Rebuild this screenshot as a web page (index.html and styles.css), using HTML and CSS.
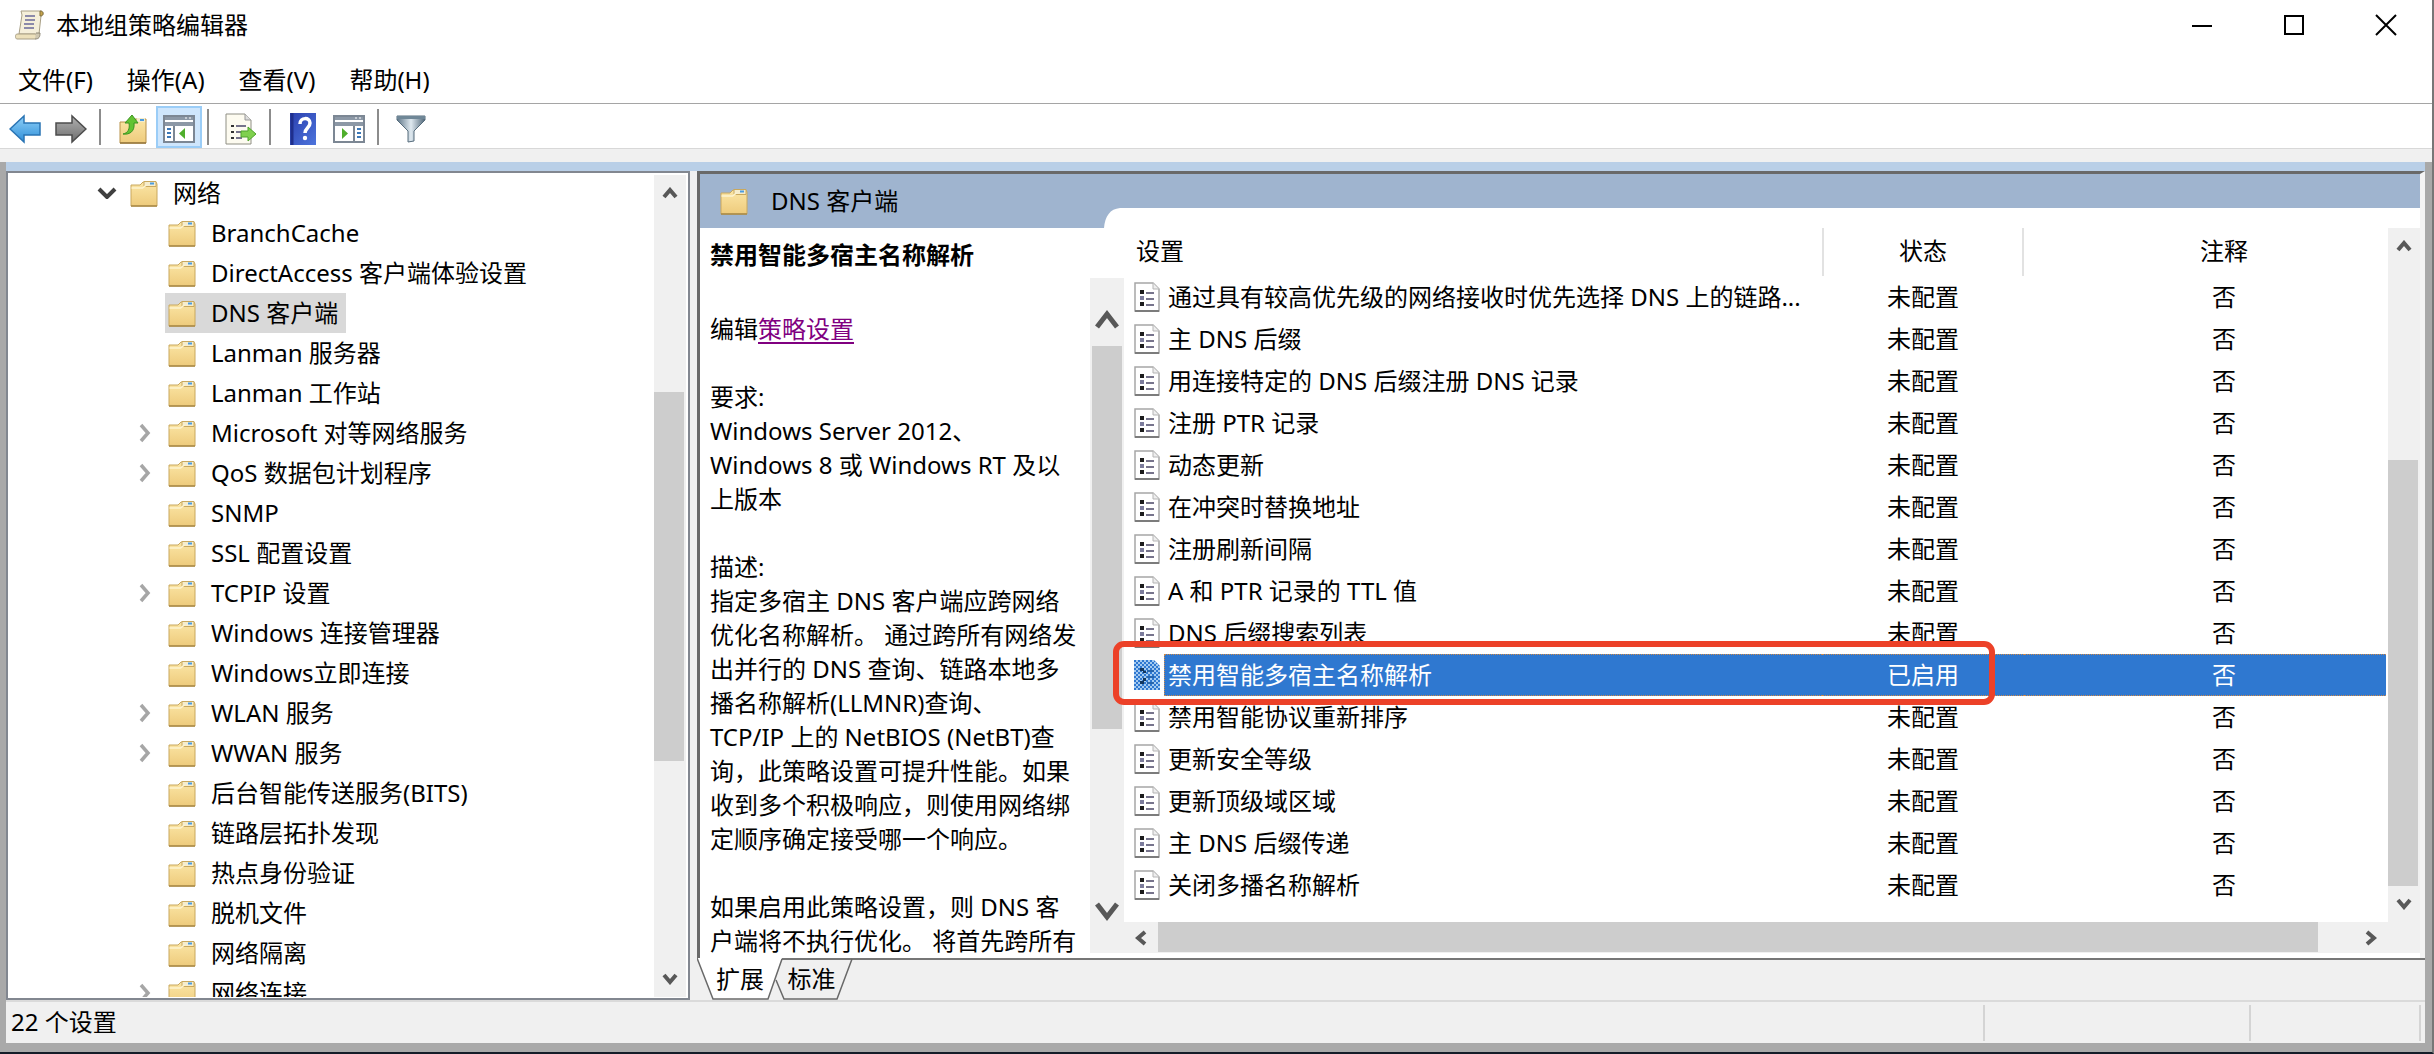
FILE: index.html
```html
<!DOCTYPE html>
<html lang="zh-CN">
<head>
<meta charset="utf-8">
<title>本地组策略编辑器</title>
<link rel="stylesheet" href="styles.css">
</head>
<body>
<svg class="defs" aria-hidden="true">
  <defs>
    <linearGradient id="gFolder" x1="0" y1="0" x2="0" y2="1"><stop offset="0" stop-color="#fbe6a6"/><stop offset="1" stop-color="#eecb7c"/></linearGradient>
    <linearGradient id="gBlue" x1="0" y1="0" x2="0" y2="1"><stop offset="0" stop-color="#8fd0f8"/><stop offset="1" stop-color="#2f8fd8"/></linearGradient>
    <linearGradient id="gGray" x1="0" y1="0" x2="0" y2="1"><stop offset="0" stop-color="#b0b0b0"/><stop offset="1" stop-color="#6e6e6e"/></linearGradient>
    <linearGradient id="gHelp" x1="0" y1="0" x2="1" y2="1"><stop offset="0" stop-color="#2a3fae"/><stop offset="1" stop-color="#4d74dc"/></linearGradient>
    <linearGradient id="gFunnel" x1="0" y1="0" x2="1" y2="0"><stop offset="0" stop-color="#5d7486"/><stop offset=".5" stop-color="#dfe9f0"/><stop offset="1" stop-color="#4f6678"/></linearGradient>
    <pattern id="pDither" width="4" height="4" patternUnits="userSpaceOnUse"><rect width="4" height="4" fill="#a4caf0"/><rect width="2" height="2" fill="#2f78d0"/><rect x="2" y="2" width="2" height="2" fill="#2f78d0"/></pattern>
    <symbol id="folder" viewBox="0 0 28 27">
      <path d="M1 5h9l3-3h13l1 2v22H1z" fill="url(#gFolder)" stroke="#c9a85e"/>
      <path d="M14 1.500h12v5H14z" fill="#f6edcd" stroke="#c9a85e"/>
      <path d="M20 2.500h4v2h-4z" fill="#4a9be0"/>
      <path d="M1.500 8h11l4-3" fill="none" stroke="#fdf3cf" stroke-width="1.500"/>
      <path d="M1 26h26" stroke="#a98846" stroke-width="1.500"/>
    </symbol>
    <symbol id="policy" viewBox="0 0 26 30">
      <path d="M1 1h18l6 6v22H1z" fill="#fff" stroke="#a6a6a6" stroke-width="1.500"/>
      <path d="M19 1v6h6" fill="#eee" stroke="#b5b5b5"/>
      <path d="M1 29h24" stroke="#7c7c7c" stroke-width="2"/>
      <path d="M6 8h4v4H6zM6 20h4v4H6z" fill="#1c1c1c"/><path d="M6 14h4v4H6z" fill="#7c7c9c"/>
      <path d="M12 11h8M12 17h8M12 23h8" stroke="#77748c" stroke-width="2"/>
    </symbol>
    <symbol id="policy-sel" viewBox="0 0 26 30">
      <path d="M0 0h20l6 6v24H0z" fill="url(#pDither)"/>
      <path d="M6 8h4v3H6zM6 21h4v3H6zM9 11h3v2H9zM9 18h3v3H9z" fill="#12365f"/>
      <path d="M13 11h7M13 17h7M13 23h7" stroke="#2866ae" stroke-width="2"/>
    </symbol>
    <symbol id="up" viewBox="0 0 16 12"><path d="M2 10l6-7 6 7" fill="none" stroke="#585858" stroke-width="4"/></symbol>
    <symbol id="down" viewBox="0 0 16 12"><path d="M2 2l6 7 6-7" fill="none" stroke="#585858" stroke-width="4"/></symbol>
    <symbol id="right" viewBox="0 0 12 16"><path d="M2 2l7 6-7 6" fill="none" stroke="#585858" stroke-width="4"/></symbol>
    <symbol id="left" viewBox="0 0 12 16"><path d="M10 2L3 8l7 6" fill="none" stroke="#585858" stroke-width="4"/></symbol>
    <symbol id="closed" viewBox="0 0 12 20"><path d="M2 2l7 8-7 8" fill="none" stroke="#a6a6a6" stroke-width="3.500"/></symbol>
    <symbol id="open" viewBox="0 0 20 12"><path d="M2 2l8 8 8-8" fill="none" stroke="#404040" stroke-width="4"/></symbol>
  </defs>
</svg>

<div class="window">
  <header class="titlebar">
    <svg class="app-icon" viewBox="0 0 30 30" aria-hidden="true">
      <path d="M6 1h20c3 0 3 5 0 5l-2 18H4L7 5z" fill="#f5efda" stroke="#a89f86"/>
      <path d="M25 1c4 0 4 5 0 5z" fill="#c7a54c" stroke="#84713a"/>
      <path d="M2 24h18c2 0 2 5 0 5H2c-2 0-2-5 0-5z" fill="#ece0bb" stroke="#a89f86"/>
      <path d="M20 29c4 0 5-2 5-6h-4" fill="#cfc7b0" stroke="#8d8775"/>
      <path d="M10 6h10M10 10h10M9 14h10M9 18h10" stroke="#6a6a9a" stroke-width="1.500"/>
    </svg>
    <h1 class="title">本地组策略编辑器</h1>
    <div class="caption-buttons">
      <button class="caption" aria-label="最小化"><svg width="22" height="22" viewBox="0 0 22 22"><path d="M1 12h20" stroke="#000" stroke-width="2"/></svg></button>
      <button class="caption" aria-label="最大化"><svg width="22" height="22" viewBox="0 0 22 22"><path d="M2 2h18v18H2z" fill="none" stroke="#000" stroke-width="2"/></svg></button>
      <button class="caption" aria-label="关闭"><svg width="22" height="22" viewBox="0 0 22 22"><path d="M1 1l20 20M21 1L1 21" stroke="#000" stroke-width="2"/></svg></button>
    </div>
  </header>

  <nav class="menubar">
    <button>文件(F)</button><button>操作(A)</button><button>查看(V)</button><button>帮助(H)</button>
  </nav>

  <div class="toolbar">
    <button aria-label="后退"><svg width="32" height="30" viewBox="0 0 32 30"><path d="M1 15L15 2v7h16v12H15v7z" fill="url(#gBlue)" stroke="#2a74b4" stroke-width="1.500"/></svg></button>
    <button aria-label="前进"><svg width="32" height="30" viewBox="0 0 32 30"><path d="M31 15L17 2v7H1v12h16v7z" fill="url(#gGray)" stroke="#4c4c4c" stroke-width="1.500"/></svg></button>
    <i class="sep"></i>
    <button aria-label="上一级"><svg width="28" height="30" viewBox="0 0 28 30"><path d="M1 8h9l2-3h15v24H1z" fill="url(#gFolder)" stroke="#b8924a"/><path d="M18 4h8v4h-8z" fill="#f4eccb"/><path d="M21 5h4v2h-4z" fill="#4a9be0"/><path d="M1 29h26" stroke="#94763c" stroke-width="1.500"/><path d="M4 20c5-1 7-5 6-11H6l7-8 6 8h-4c1 8-4 12-11 11z" fill="#63c332" stroke="#3b9420"/></svg></button>
    <button class="pressed" aria-label="显示/隐藏控制台树" aria-pressed="true"><svg width="32" height="28" viewBox="0 0 32 28"><path d="M1 1h30v26H1z" fill="#fff" stroke="#7c8794" stroke-width="2"/><path d="M2 2h28v3H2zM2 7h28v4H2z" fill="#8c98a6"/><path d="M22 3h2M26 3h2" stroke="#fff"/><path d="M11 11v15" stroke="#7c8794" stroke-width="2"/><path d="M4 14h4M4 18h4M4 22h4" stroke="#3b78b8" stroke-width="2"/><path d="M22 13v11l-6-5.500z" fill="#4fae2c"/></svg></button>
    <i class="sep"></i>
    <button aria-label="导出列表"><svg width="32" height="32" viewBox="0 0 32 32"><path d="M1 1h19l6 6v24H1z" fill="#fdfbf0" stroke="#8f8f84"/><path d="M20 1v6h6" fill="#ddd" stroke="#999"/><path d="M6 12h3v2H6zM6 18h3v2H6zM6 24h3v2H6z" fill="#333"/><path d="M11 13h10M11 19h6M11 25h6" stroke="#77748c" stroke-width="2"/><path d="M16 18h7v-4l8 7-8 7v-4h-7z" fill="#7fd04e" stroke="#4fa32c"/></svg></button>
    <i class="sep"></i>
    <button aria-label="帮助"><svg width="26" height="32" viewBox="0 0 26 32"><path d="M0 0h26v32H0z" fill="url(#gHelp)"/><path d="M2 0v32" stroke="#1f2f8c" stroke-width="3"/><path d="M10 11c0-7 10-7 10-1 0 5-5 5-5 10" fill="none" stroke="#fff" stroke-width="3.500"/><circle cx="15" cy="25" r="2.200" fill="#fff"/></svg></button>
    <button aria-label="显示/隐藏操作窗格"><svg width="32" height="28" viewBox="0 0 32 28"><path d="M1 1h30v26H1z" fill="#fff" stroke="#7c8794" stroke-width="2"/><path d="M2 2h28v3H2zM2 7h28v4H2z" fill="#8c98a6"/><path d="M22 3h2M26 3h2" stroke="#fff"/><path d="M21 11v15" stroke="#7c8794" stroke-width="2"/><path d="M24 14h4M24 18h4M24 22h4" stroke="#3b78b8" stroke-width="2"/><path d="M9 13v11l6-5.500z" fill="#4fae2c"/></svg></button>
    <i class="sep"></i>
    <button aria-label="筛选器"><svg width="30" height="28" viewBox="0 0 30 28"><path d="M1 1h28v4L18 16v10l-6 1V16L1 5z" fill="url(#gFunnel)" stroke="#566c7c"/><path d="M1 1h28v3H1z" fill="#6f8797"/></svg></button>
  </div>

  <div class="band"></div>
  <div class="frame">
    <div class="blue-edge"></div>
    <main class="workspace">
      <section class="tree-pane" aria-label="控制台树">
        <ul class="tree">
          <li class="root"><span class="twist"><svg width="20" height="12"><use href="#open"/></svg></span><span class="node"><svg class="folder"><use href="#folder"/></svg>网络</span>
            <ul>
              <li><span class="twist"></span><span class="node"><svg class="folder"><use href="#folder"/></svg>BranchCache</span></li>
              <li><span class="twist"></span><span class="node"><svg class="folder"><use href="#folder"/></svg>DirectAccess 客户端体验设置</span></li>
              <li><span class="twist"></span><span class="node current"><svg class="folder"><use href="#folder"/></svg>DNS 客户端</span></li>
              <li><span class="twist"></span><span class="node"><svg class="folder"><use href="#folder"/></svg>Lanman 服务器</span></li>
              <li><span class="twist"></span><span class="node"><svg class="folder"><use href="#folder"/></svg>Lanman 工作站</span></li>
              <li><span class="twist"><svg width="12" height="20"><use href="#closed"/></svg></span><span class="node"><svg class="folder"><use href="#folder"/></svg>Microsoft 对等网络服务</span></li>
              <li><span class="twist"><svg width="12" height="20"><use href="#closed"/></svg></span><span class="node"><svg class="folder"><use href="#folder"/></svg>QoS 数据包计划程序</span></li>
              <li><span class="twist"></span><span class="node"><svg class="folder"><use href="#folder"/></svg>SNMP</span></li>
              <li><span class="twist"></span><span class="node"><svg class="folder"><use href="#folder"/></svg>SSL 配置设置</span></li>
              <li><span class="twist"><svg width="12" height="20"><use href="#closed"/></svg></span><span class="node"><svg class="folder"><use href="#folder"/></svg>TCPIP 设置</span></li>
              <li><span class="twist"></span><span class="node"><svg class="folder"><use href="#folder"/></svg>Windows 连接管理器</span></li>
              <li><span class="twist"></span><span class="node"><svg class="folder"><use href="#folder"/></svg>Windows立即连接</span></li>
              <li><span class="twist"><svg width="12" height="20"><use href="#closed"/></svg></span><span class="node"><svg class="folder"><use href="#folder"/></svg>WLAN 服务</span></li>
              <li><span class="twist"><svg width="12" height="20"><use href="#closed"/></svg></span><span class="node"><svg class="folder"><use href="#folder"/></svg>WWAN 服务</span></li>
              <li><span class="twist"></span><span class="node"><svg class="folder"><use href="#folder"/></svg>后台智能传送服务(BITS)</span></li>
              <li><span class="twist"></span><span class="node"><svg class="folder"><use href="#folder"/></svg>链路层拓扑发现</span></li>
              <li><span class="twist"></span><span class="node"><svg class="folder"><use href="#folder"/></svg>热点身份验证</span></li>
              <li><span class="twist"></span><span class="node"><svg class="folder"><use href="#folder"/></svg>脱机文件</span></li>
              <li><span class="twist"></span><span class="node"><svg class="folder"><use href="#folder"/></svg>网络隔离</span></li>
              <li><span class="twist"><svg width="12" height="20"><use href="#closed"/></svg></span><span class="node"><svg class="folder"><use href="#folder"/></svg>网络连接</span></li>
            </ul>
          </li>
        </ul>
        <div class="vscroll tree-scroll">
          <button aria-label="向上滚动"><svg width="16" height="12"><use href="#up"/></svg></button>
          <i class="before"></i><i class="thumb"></i><i class="after"></i>
          <button aria-label="向下滚动"><svg width="16" height="12"><use href="#down"/></svg></button>
        </div>
      </section>

      <section class="result-pane">
        <div class="detail">
          <div class="detail-head">
            <h2><svg class="folder"><use href="#folder"/></svg>DNS 客户端</h2>
            <div class="notch"><svg width="16" height="20" viewBox="0 0 16 20"><path d="M0 20C1 8 6 1 16 0v20z" fill="#fff"/></svg><i></i></div>
          </div>
          <div class="detail-body">
            <article class="description">
              <h3>禁用智能多宿主名称解析</h3>
              <div class="desc-row">
                <div class="desc-text">
                  <p>编辑<a href="#policy-setting">策略设置</a></p>
                  <p>要求:<br>Windows Server 2012、<br>Windows 8 或 Windows RT 及以<br>上版本</p>
                  <p>描述:<br>指定多宿主 DNS 客户端应跨网络<br>优化名称解析。 通过跨所有网络发<br>出并行的 DNS 查询、链路本地多<br>播名称解析(LLMNR)查询、<br>TCP/IP 上的 NetBIOS (NetBT)查<br>询，此策略设置可提升性能。如果<br>收到多个积极响应，则使用网络绑<br>定顺序确定接受哪一个响应。</p>
                  <p>如果启用此策略设置，则 DNS 客<br>户端将不执行优化。 将首先跨所有</p>
                </div>
                <div class="vscroll desc-scroll">
                  <button aria-label="向上滚动"><svg width="24" height="20" viewBox="0 0 24 20"><path d="M2 18l10-13 10 13" fill="none" stroke="#585858" stroke-width="5"/></svg></button>
                  <i class="thumb"></i><i class="after"></i>
                  <button aria-label="向下滚动"><svg width="24" height="20" viewBox="0 0 24 20"><path d="M2 2l10 13L22 2" fill="none" stroke="#585858" stroke-width="5"/></svg></button>
                </div>
              </div>
            </article>
            <div class="list">
              <div class="list-row">
                <div class="list-view">
                  <table>
                    <colgroup><col class="c-icon"><col><col class="c-state"><col class="c-note"></colgroup>
                    <thead><tr><th colspan="2">设置</th><th class="state">状态</th><th class="note">注释</th></tr></thead>
                    <tbody>
                      <tr><td><svg class="policy"><use href="#policy"/></svg></td><td>通过具有较高优先级的网络接收时优先选择 DNS 上的链路...</td><td>未配置</td><td>否</td></tr>
                      <tr><td><svg class="policy"><use href="#policy"/></svg></td><td>主 DNS 后缀</td><td>未配置</td><td>否</td></tr>
                      <tr><td><svg class="policy"><use href="#policy"/></svg></td><td>用连接特定的 DNS 后缀注册 DNS 记录</td><td>未配置</td><td>否</td></tr>
                      <tr><td><svg class="policy"><use href="#policy"/></svg></td><td>注册 PTR 记录</td><td>未配置</td><td>否</td></tr>
                      <tr><td><svg class="policy"><use href="#policy"/></svg></td><td>动态更新</td><td>未配置</td><td>否</td></tr>
                      <tr><td><svg class="policy"><use href="#policy"/></svg></td><td>在冲突时替换地址</td><td>未配置</td><td>否</td></tr>
                      <tr><td><svg class="policy"><use href="#policy"/></svg></td><td>注册刷新间隔</td><td>未配置</td><td>否</td></tr>
                      <tr><td><svg class="policy"><use href="#policy"/></svg></td><td>A 和 PTR 记录的 TTL 值</td><td>未配置</td><td>否</td></tr>
                      <tr><td><svg class="policy"><use href="#policy"/></svg></td><td>DNS 后缀搜索列表</td><td>未配置</td><td>否</td></tr>
                      <tr class="selected"><td><svg class="policy"><use href="#policy-sel"/></svg></td><td>禁用智能多宿主名称解析</td><td>已启用</td><td>否</td></tr>
                      <tr><td><svg class="policy"><use href="#policy"/></svg></td><td>禁用智能协议重新排序</td><td>未配置</td><td>否</td></tr>
                      <tr><td><svg class="policy"><use href="#policy"/></svg></td><td>更新安全等级</td><td>未配置</td><td>否</td></tr>
                      <tr><td><svg class="policy"><use href="#policy"/></svg></td><td>更新顶级域区域</td><td>未配置</td><td>否</td></tr>
                      <tr><td><svg class="policy"><use href="#policy"/></svg></td><td>主 DNS 后缀传递</td><td>未配置</td><td>否</td></tr>
                      <tr><td><svg class="policy"><use href="#policy"/></svg></td><td>关闭多播名称解析</td><td>未配置</td><td>否</td></tr>
                    </tbody>
                  </table>
                </div>
                <div class="vscroll list-scroll">
                  <button aria-label="向上滚动"><svg width="16" height="12"><use href="#up"/></svg></button>
                  <i class="before"></i><i class="thumb"></i>
                  <button aria-label="向下滚动"><svg width="16" height="12"><use href="#down"/></svg></button>
                </div>
              </div>
              <div class="hscroll">
                <button aria-label="向左滚动"><svg width="12" height="16"><use href="#left"/></svg></button>
                <i class="thumb"></i><i class="after"></i>
                <button aria-label="向右滚动"><svg width="12" height="16"><use href="#right"/></svg></button>
              </div>
              <div class="callout"></div>
            </div>
          </div>
        </div>
        <div class="tabs">
          <button class="tab active"><svg width="86" height="42" viewBox="0 0 86 42" aria-hidden="true"><path d="M0 0l16 41h55L85 0z" fill="#fff"/><path d="M0 0l16 41h55L85 1" fill="none" stroke="#696969" stroke-width="1.500"/></svg><span>扩展</span></button>
          <button class="tab"><svg width="78" height="42" viewBox="0 0 78 42" aria-hidden="true"><path d="M1 22l8 19h53L77 1" fill="none" stroke="#696969" stroke-width="1.500"/></svg><span>标准</span></button>
        </div>
      </section>
    </main>
    <footer class="status"><span class="message">22 个设置</span><span class="cell wide"></span><span class="cell"></span></footer>
  </div>
</div>
</body>
</html>
```
FILE: styles.css
```css
* { box-sizing: border-box; }

body {
  margin: 0;
  height: 100vh;
  border-right: 2px solid #777;
  border-bottom: 2px solid #141c28;
  overflow: hidden;
  font: 24px/34px "Noto Sans", "Noto Sans CJK SC", sans-serif;
  color: #000;
  background: #fff;
}

h1, h2, h3, p, ul { margin: 0; padding: 0; font-size: inherit; font-weight: 400; }
ul { list-style: none; }
svg, i { display: block; flex: none; }
button { margin: 0; padding: 0; border: 0; background: none; font: inherit; color: inherit; }
.defs { position: absolute; width: 0; height: 0; }
.folder { width: 28px; height: 27px; }
.policy { width: 26px; height: 30px; margin-left: 8px; }

.window { display: flex; flex-direction: column; height: 100%; }

/* title and menus */
.titlebar { display: flex; align-items: center; height: 50px; padding-left: 15px; }
.app-icon { width: 30px; height: 30px; }
.title { flex: 1; padding-left: 11px; }
.caption-buttons { display: flex; }
.caption { display: grid; place-items: center; width: 92px; height: 50px; }

.menubar { display: flex; align-items: center; gap: 34px; height: 54px; padding: 6px 0 0 18px; border-bottom: 1px solid #a5a5a5; }

.toolbar { display: flex; align-items: center; height: 45px; padding: 1px 0 0 2px; border-bottom: 1px solid #d8d8d8; }
.toolbar button { display: grid; place-items: center; width: 46px; height: 42px; padding-top: 4px; }
.toolbar .pressed { background: #cfe6fc; border: 2px solid #9bcdf7; }
.sep { width: 2px; height: 36px; margin: 0 9px 0 5px; background: #8c8c8c; }

.band { height: 13px; background: #f0f0f0; }

.frame { flex: 1; min-height: 0; display: flex; flex-direction: column; padding: 0 7px 9px 6px; background: #a9a9a9; }
.blue-edge { height: 9px; background: #b9cfe7; }
.workspace { flex: 1; min-height: 0; display: grid; grid-template-columns: 684px 1fr; gap: 7px; background: #f0f0f0; }

/* console tree */
.tree-pane { display: flex; min-height: 0; padding: 0 2px 1px 0; border: 2px solid #828790; background: #fff; }
.tree { flex: 1; min-width: 0; overflow: hidden; white-space: nowrap; }
.tree li { line-height: 40px; padding-left: 126px; }
.tree .root { padding-left: 88px; }
.tree .root > ul { margin-left: -88px; }
.twist { display: inline-grid; place-items: center; width: 22px; height: 40px; vertical-align: top; }
.node { display: inline-flex; align-items: center; gap: 15px; height: 40px; margin-left: 9px; padding: 0 8px 0 3px; vertical-align: top; }
.node.current { background: #d9d9d9; }

/* scroll bars */
.vscroll { display: flex; flex-direction: column; width: 32px; background: #f0f0f0; }
.vscroll button { display: grid; place-items: center; height: 36px; }
.thumb { background: #cdcdcd; }
.tree-scroll { margin: 2px 0 0; }
.tree-scroll .thumb { flex: 368; margin-right: 2px; }
.tree-scroll .before { flex: 181; }
.tree-scroll .after { flex: 199; }
.list-scroll .before { flex: 196; }
.list-scroll .thumb { flex: 426; margin-right: 2px; }
.desc-scroll { width: 34px; padding: 14px 0; }
.vscroll.desc-scroll button { height: 54px; }
.desc-scroll .thumb { flex: 382; margin: 0 2px; }
.desc-scroll .after { flex: 156; }
.hscroll { display: flex; height: 31px; padding-right: 32px; background: #f0f0f0; }
.hscroll button { display: grid; place-items: center; width: 34px; }
.hscroll .thumb { flex: 1160; margin-bottom: 1px; }
.hscroll .after { flex: 36; }

/* result pane */
.result-pane { display: flex; flex-direction: column; min-width: 0; min-height: 0; }
.detail { flex: 1; min-height: 0; display: flex; flex-direction: column; padding-bottom: 5px; border: solid #696969; border-width: 3px 0 0 3px; border-right: 5px solid #f4f4f4; background: #fff; }
.detail-head { display: flex; height: 54px; background: #9fb4cf; }
.detail-head h2 { display: flex; align-items: center; gap: 23px; width: 404px; padding-left: 20px; }
.notch { flex: 1; display: flex; height: 20px; margin-top: 34px; }
.notch i { flex: 1; background: #fff; }
.detail-body { flex: 1; min-height: 0; display: flex; }

.description { display: flex; flex-direction: column; width: 424px; }
.description h3 { height: 50px; padding: 10px 0 0 10px; font-weight: 700; }
.desc-row { flex: 1; min-height: 0; display: flex; }
.desc-text { flex: 1; min-width: 0; padding: 34px 0 0 10px; overflow: hidden; white-space: nowrap; }
.desc-text p { margin-bottom: 34px; }
.desc-text a { color: #800080; text-underline-offset: 4px; }

.list { position: relative; flex: 1; min-width: 0; display: flex; flex-direction: column; }
.list-row { flex: 1; min-height: 0; display: flex; }
.list-view { flex: 1; min-width: 0; overflow: hidden; padding: 0 2px; }
table { width: 100%; table-layout: fixed; border-collapse: separate; border-spacing: 0; }
.c-icon { width: 38px; }
.c-state { width: 202px; }
.c-note { width: 362px; }
th { height: 48px; padding: 0 0 2px 10px; font-weight: 400; text-align: left; }
th.state { padding: 0 0 2px; text-align: center; border: solid #e2e2e2; border-width: 0 2px; }
th.note { padding: 0 0 2px 38px; text-align: center; }
td { height: 42px; padding: 0; white-space: nowrap; }
td:nth-child(2) { padding-left: 4px; }
td:nth-child(3) { text-align: center; }
td:nth-child(4) { padding-left: 38px; text-align: center; }
.selected td + td { color: #fff; background: #2f78d0; border: dotted #d08a48; border-width: 1px 0; }
.selected td:nth-child(2) { border-left-width: 1px; padding-left: 3px; }

.callout { position: absolute; left: -11px; right: 425px; top: 413px; height: 64px; border: 6px solid #ec4128; border-radius: 11px; pointer-events: none; }

/* view tabs */
.tabs { display: flex; height: 42px; border-top: 2px solid #767676; }
.tab { position: relative; width: 86px; height: 42px; margin-top: -2px; text-align: center; }
.tab svg { position: absolute; left: 0; top: 0; }
.tab span { position: relative; }
.tab + .tab { width: 78px; margin-left: -8px; padding-right: 5px; }

/* status bar */
.status { display: flex; height: 43px; padding: 3px 4px 2px 5px; border-top: 2px solid #dadada; background: #f0f0f0; }
.message { flex: 1; }
.cell { width: 170px; border-right: 2px solid #d4d4d4; }
.cell.wide { width: 268px; border-left: 2px solid #d4d4d4; }
```
